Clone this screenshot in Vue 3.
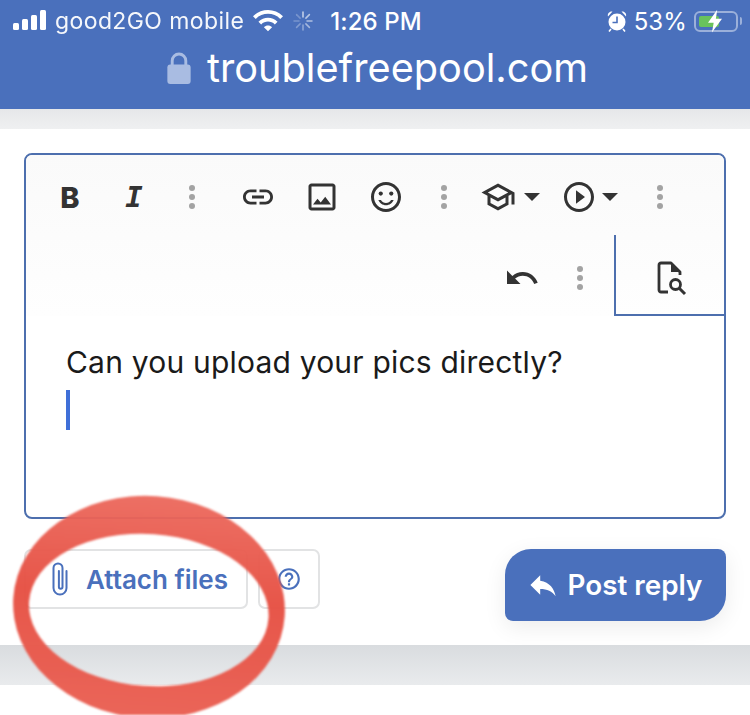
<script setup>
const signalBars = [7, 11, 15, 20]
</script>

<template>
  <div class="page">
    <header class="browser">
      <div class="status">
        <div class="signal">
          <span v-for="h in signalBars" :key="h" class="bar" :style="{ height: h + 'px' }"></span>
        </div>
        <span class="carrier">good2GO mobile</span>
        <svg class="wifi" viewBox="1 4.5 22 16" width="30" height="22" fill="#fff">
          <path d="M1 9l2 2c4.97-4.97 13.03-4.97 18 0l2-2C16.93 2.93 7.08 2.93 1 9zm8 8l3 3 3-3c-1.65-1.66-4.34-1.66-6 0zm-4-4l2 2c2.76-2.76 7.24-2.76 10 0l2-2C15.14 9.14 8.87 9.14 5 13z" />
        </svg>
        <svg class="spinner" viewBox="0 0 20 20" width="20" height="20" stroke="#fff" stroke-width="1.5" stroke-linecap="round">
          <path opacity=".7" d="M10 1v5" />
          <path opacity=".6" d="M16.4 3.6l-3.5 3.5" />
          <path opacity=".55" d="M19 10h-5" />
          <path opacity=".5" d="M16.4 16.4l-3.5-3.5" />
          <path opacity=".4" d="M10 19v-5" />
          <path opacity=".3" d="M3.6 16.4l3.5-3.5" />
          <path opacity=".25" d="M1 10h5" />
          <path opacity=".25" d="M3.6 3.6l3.5 3.5" />
        </svg>
        <span class="time">1:26 PM</span>
        <svg class="alarm" viewBox="0 0 20 22" width="20" height="22">
          <circle cx="10" cy="12" r="8.5" fill="#fff" />
          <path d="M10 6.5V12.5H5.5" fill="none" stroke="#4a70bc" stroke-width="1.6" />
          <path d="M1 6.5C.2 3.5 2.5 1 5.5 1.5zM19 6.5c.8-3-1.5-5.500-4.500-5z" fill="#fff" />
          <path d="M4 19l-2 2.500M16 19l2 2.500" stroke="#fff" stroke-width="1.600" />
        </svg>
        <span class="percent">53%</span>
        <div class="battery">
          <span class="charge"></span>
          <svg class="bolt" viewBox="0 0 16 26" width="14" height="24" fill="#fff">
            <path d="M10.500 0L0 15h6.500L4.500 26 16 10.500H9z" />
          </svg>
        </div>
        <span class="nub"></span>
      </div>
      <div class="address">
        <svg class="lock" viewBox="0 0 24 34" width="24" height="33">
          <rect x="0" y="13" width="24" height="20" rx="3" fill="#a9bce2" />
          <path d="M5 14V9a7 7 0 0 1 14 0v5" fill="none" stroke="#a9bce2" stroke-width="3" />
        </svg>
        <span class="url">troublefreepool.com</span>
      </div>
    </header>

    <div class="band top-band"></div>

    <main class="panel">
      <div class="editor">
        <div class="toolbar">
          <div class="row row-main">
            <button class="tool tool-text bold">B</button>
            <button class="tool tool-text italic">I</button>
            <span class="dots"><i></i><i></i><i></i></span>
            <button class="tool link-tool">
              <svg viewBox="0 0 24 24" width="36" height="36"><path d="M3.900 12c0-1.710 1.390-3.100 3.100-3.100h4V7H7c-2.760 0-5 2.240-5 5s2.240 5 5 5h4v-1.900H7c-1.710 0-3.100-1.390-3.100-3.100zM8 13h8v-2H8v2zm9-6h-4v1.900h4c1.710 0 3.100 1.390 3.100 3.100s-1.390 3.100-3.100 3.100h-4V17h4c2.760 0 5-2.240 5-5s-2.240-5-5-5z" /></svg>
            </button>
            <button class="tool">
              <svg viewBox="0 0 24 24" width="36" height="36"><path d="M19 5v14H5V5h14m0-2H5c-1.100 0-2 .9-2 2v14c0 1.100.9 2 2 2h14c1.100 0 2-.9 2-2V5c0-1.100-.9-2-2-2zm-4.860 8.860l-3 3.870L9 13.140 6 17h12l-3.860-5.140z" /></svg>
            </button>
            <button class="tool">
              <svg viewBox="0 0 24 24" width="36" height="36">
                <path d="M11.990 2C6.470 2 2 6.480 2 12s4.470 10 9.990 10C17.520 22 22 17.520 22 12S17.520 2 11.990 2zM12 20c-4.420 0-8-3.580-8-8s3.580-8 8-8 8 3.580 8 8-3.580 8-8 8z" />
                <circle cx="8.500" cy="9.700" r="1.400" /><circle cx="15.500" cy="9.700" r="1.400" />
                <path d="M12 17.500c2.330 0 4.310-1.460 5.110-3.500h-1.740c-.69 1.190-1.970 2-3.370 2s-2.680-.81-3.370-2H6.890c.8 2.040 2.780 3.500 5.110 3.500z" />
              </svg>
            </button>
            <span class="dots"><i></i><i></i><i></i></span>
            <button class="tool menu school">
              <svg viewBox="0 0 24 24" width="36" height="36"><path d="M12 3L1 9l4 2.180v6L12 21l7-3.820v-6l2-1.090V17h2V9L12 3zm6.820 6L12 12.720 5.180 9 12 5.280 18.820 9zM17 15.990l-5 2.730-5-2.730v-3.720L12 15l5-2.730v3.720z" /></svg>
              <span class="caret"></span>
            </button>
            <button class="tool menu play">
              <svg viewBox="0 0 24 24" width="36" height="36"><path d="M10 16.500l6-4.500-6-4.500v9zM12 2C6.480 2 2 6.480 2 12s4.480 10 10 10 10-4.480 10-10S17.520 2 12 2zm0 18c-4.410 0-8-3.590-8-8s3.590-8 8-8 8 3.590 8 8-3.590 8-8 8z" /></svg>
              <span class="caret"></span>
            </button>
            <span class="dots"><i></i><i></i><i></i></span>
          </div>
          <div class="row row-second">
            <button class="tool undo">
              <svg viewBox="0 0 24 24" width="36" height="36"><path d="M12.500 8c-2.650 0-5.050.99-6.900 2.600L2 7v9h9l-3.620-3.620c1.390-1.160 3.160-1.880 5.120-1.880 3.540 0 6.550 2.310 7.600 5.500l2.370-.78C21.080 11.030 17.150 8 12.500 8z" /></svg>
            </button>
            <span class="dots"><i></i><i></i><i></i></span>
            <button class="preview">
              <svg viewBox="0 0 32 36" width="32" height="36">
                <path d="M12 31H5a2 2 0 0 1-2-2V4a2 2 0 0 1 2-2h10l9 9v3" fill="none" stroke="#333" stroke-width="2.800" stroke-linejoin="round" />
                <path d="M15 2v9h9z" fill="#333" />
                <circle cx="19.500" cy="23.500" r="5" fill="none" stroke="#333" stroke-width="2.800" />
                <path d="M23 27l6 6" stroke="#333" stroke-width="3" />
              </svg>
            </button>
          </div>
        </div>
        <div class="content">
          <p class="message">Can you upload your pics directly?</p>
          <span class="cursor"></span>
        </div>
      </div>

      <div class="actions">
        <div class="attach-group">
          <button class="ghost attach">
            <svg viewBox="0 0 20 36" width="22" height="36" fill="none" stroke="#4a70bc" stroke-width="2" stroke-linecap="round">
              <path d="M15.500 10v17a6.500 6.500 0 0 1-13 0V7a4.500 4.500 0 0 1 9 0v19a1.800 1.800 0 0 1-3.600 0V10" />
            </svg>
            <span>Attach files</span>
          </button>
          <button class="ghost help">
            <svg viewBox="0 0 24 24" width="26" height="26" fill="#4a70bc"><path d="M11 18h2v-2h-2v2zm1-16C6.480 2 2 6.480 2 12s4.480 10 10 10 10-4.480 10-10S17.520 2 12 2zm0 18c-4.410 0-8-3.590-8-8s3.590-8 8-8 8 3.590 8 8-3.590 8-8 8zm0-14c-2.210 0-4 1.790-4 4h2c0-1.100.9-2 2-2s2 .9 2 2c0 2-3 1.750-3 5h2c0-2.250 3-2.500 3-5 0-2.210-1.790-4-4-4z" /></svg>
          </button>
        </div>
        <button class="post">
          <svg viewBox="2 4 20 16" width="28" height="24" fill="#fff"><path d="M10 9V5l-7 7 7 7v-4.100c5 0 8.500 1.600 11 5.100-1-5-4-10-11-11z" /></svg>
          <span>Post reply</span>
        </button>
      </div>
    </main>

    <div class="band bottom-band"></div>
    <div class="footer"></div>

    <svg class="ring" viewBox="0 0 750 715" width="750" height="715">
      <defs>
        <linearGradient id="ringFill" x1="0" y1="0" x2="0" y2="1">
          <stop offset="0" stop-color="#ec6a5e" />
          <stop offset=".45" stop-color="#e64f42" />
          <stop offset="1" stop-color="#ea5f52" />
        </linearGradient>
      </defs>
      <path
        fill="url(#ringFill)"
        fill-opacity=".96"
        fill-rule="evenodd"
        transform="rotate(4 149 607)"
        d="M13 607a136 111 0 1 0 272 0a136 111 0 1 0 -272 0zM29 610a120 76 0 1 0 240 0a120 76 0 1 0 -240 0z"
      />
    </svg>
  </div>
</template>

<style scoped>
.page {
  position: relative;
  width: 750px;
  height: 715px;
  overflow: hidden;
  background: #fff;
  font-family: Inter, "Liberation Sans", sans-serif;
}

.browser {
  height: 109px;
  background: #4a70bc;
  color: #fff;
}
.status {
  display: flex;
  align-items: center;
  height: 42px;
  padding-left: 13px;
}
.signal {
  display: flex;
  align-items: flex-end;
  gap: 3px;
  height: 20px;
  margin-top: -2px;
}
.bar {
  width: 6px;
  border-radius: 1.500px;
  background: #fff;
}
.carrier {
  margin-left: 9px;
  font-size: 23px;
  letter-spacing: .4px;
  opacity: .95;
}
.wifi {
  margin-left: 9px;
}
.spinner {
  margin-left: 10px;
}
.time {
  margin-left: 17px;
  font-size: 24px;
  font-weight: 500;
  letter-spacing: .1px;
}
.alarm {
  margin-left: 185px;
}
.percent {
  margin-left: 7px;
  font-size: 24px;
}
.battery {
  position: relative;
  width: 44px;
  height: 21px;
  margin-left: 7px;
  padding: 3px;
  box-sizing: border-box;
  border: 2px solid rgba(255, 255, 255, .45);
  border-radius: 6px;
}
.charge {
  display: block;
  width: 20px;
  height: 11px;
  border-radius: 2px;
  background: #69c25c;
}
.bolt {
  position: absolute;
  left: 12px;
  top: -4px;
}
.nub {
  width: 2px;
  height: 8px;
  margin-left: 2px;
  border-radius: 0 2px 2px 0;
  background: rgba(255, 255, 255, .45);
}
.address {
  display: flex;
  align-items: center;
  justify-content: center;
  gap: 16px;
  height: 52px;
  padding-left: 5px;
}
.url {
  font-size: 39.7px;
  font-weight: 400;
  line-height: 48px;
}

.top-band {
  height: 20px;
  background: linear-gradient(#e6e7e9, #eff0f1);
}
.bottom-band {
  height: 40px;
  background: linear-gradient(#d9dcdf, #e9ebed);
}
.footer {
  height: 30px;
  background: #fff;
}

.panel {
  height: 516px;
  box-sizing: border-box;
  padding: 24px;
  background: #fff;
}
.editor {
  height: 366px;
  box-sizing: border-box;
  border: 2px solid #4d6fae;
  border-radius: 8px;
  overflow: hidden;
}
.toolbar {
  background: linear-gradient(#fafafa, #fefefe);
}
.row {
  display: flex;
  align-items: center;
}
.row-main {
  height: 80px;
  padding: 4px 0 0 12px;
  box-sizing: border-box;
}
.row-second {
  height: 81px;
  justify-content: flex-end;
}
.tool {
  display: flex;
  align-items: center;
  justify-content: center;
  width: 64px;
  height: 60px;
  padding: 0;
  border: 0;
  background: none;
  fill: #333;
  color: #333;
}
.tool-text {
  line-height: 1;
}
.bold {
  font-family: Inter, sans-serif;
  font-size: 29px;
  font-weight: 800;
}
.italic {
  font-family: "DejaVu Sans Mono", monospace;
  font-weight: 700;
  font-style: italic;
  font-size: 29px;
}
.link-tool {
  margin-left: 8px;
}
.dots {
  display: flex;
  flex-direction: column;
  align-items: center;
  justify-content: center;
  gap: 3px;
  width: 52px;
}
.dots i {
  width: 6px;
  height: 6px;
  border-radius: 50%;
  background: #a3a3a3;
}
.menu {
  justify-content: flex-start;
}
.school {
  width: 78px;
  margin-left: 10px;
  gap: 8px;
}
.play {
  width: 76px;
  margin-left: 3px;
  gap: 5px;
}
.caret {
  width: 0;
  height: 0;
  border-left: 8px solid transparent;
  border-right: 8px solid transparent;
  border-top: 8px solid #333;
}
.row-main > .dots:last-child {
  margin-left: -3px;
}
.row-second .tool,
.row-second .dots {
  padding-top: 5px;
}
.row-second .dots {
  margin-left: 0;
  margin-right: 8px;
}
.undo {
  width: 64px;
}
.preview {
  display: flex;
  align-items: center;
  justify-content: center;
  width: 110px;
  height: 81px;
  box-sizing: border-box;
  padding: 8px 0 0 4px;
  border: 0;
  border-left: 2px solid #4d6fae;
  border-bottom: 2px solid #4d6fae;
  background: none;
}
.content {
  padding: 28px 40px 0;
}
.message {
  margin: 0;
  font-family: Inter, sans-serif;
  font-size: 30px;
  letter-spacing: .2px;
  line-height: 36px;
  color: #1a1a1a;
}
.cursor {
  display: block;
  width: 4px;
  height: 40px;
  margin-top: 10px;
  background: #3f6fd8;
}

.actions {
  display: flex;
  justify-content: space-between;
  align-items: flex-start;
  margin-top: 30px;
}
.attach-group {
  display: flex;
  gap: 10px;
}
.ghost {
  display: flex;
  align-items: center;
  justify-content: center;
  height: 60px;
  box-sizing: border-box;
  padding: 0;
  border: 2px solid #e2e3e4;
  border-radius: 7px;
  background: #fff;
  color: #4a70bc;
  font-family: Inter, sans-serif;
  font-size: 26px;
  font-weight: 600;
}
.attach {
  width: 224px;
  gap: 14px;
  padding-left: 6px;
}
.help {
  width: 62px;
}
.post {
  display: flex;
  align-items: center;
  justify-content: center;
  gap: 11px;
  width: 221px;
  height: 72px;
  padding: 0;
  border: 0;
  border-radius: 26px 8px 26px 8px;
  background: #4a70bc;
  color: #fff;
  font-family: Inter, sans-serif;
  font-size: 27.800px;
  font-weight: 600;
  box-shadow: 0 6px 22px rgba(0, 0, 0, .08);
}

.ring {
  position: absolute;
  left: 0;
  top: 0;
  filter: blur(1px);
  pointer-events: none;
}
</style>

<style>
html,
body {
  margin: 0;
  background: #fff;
}
</style>
